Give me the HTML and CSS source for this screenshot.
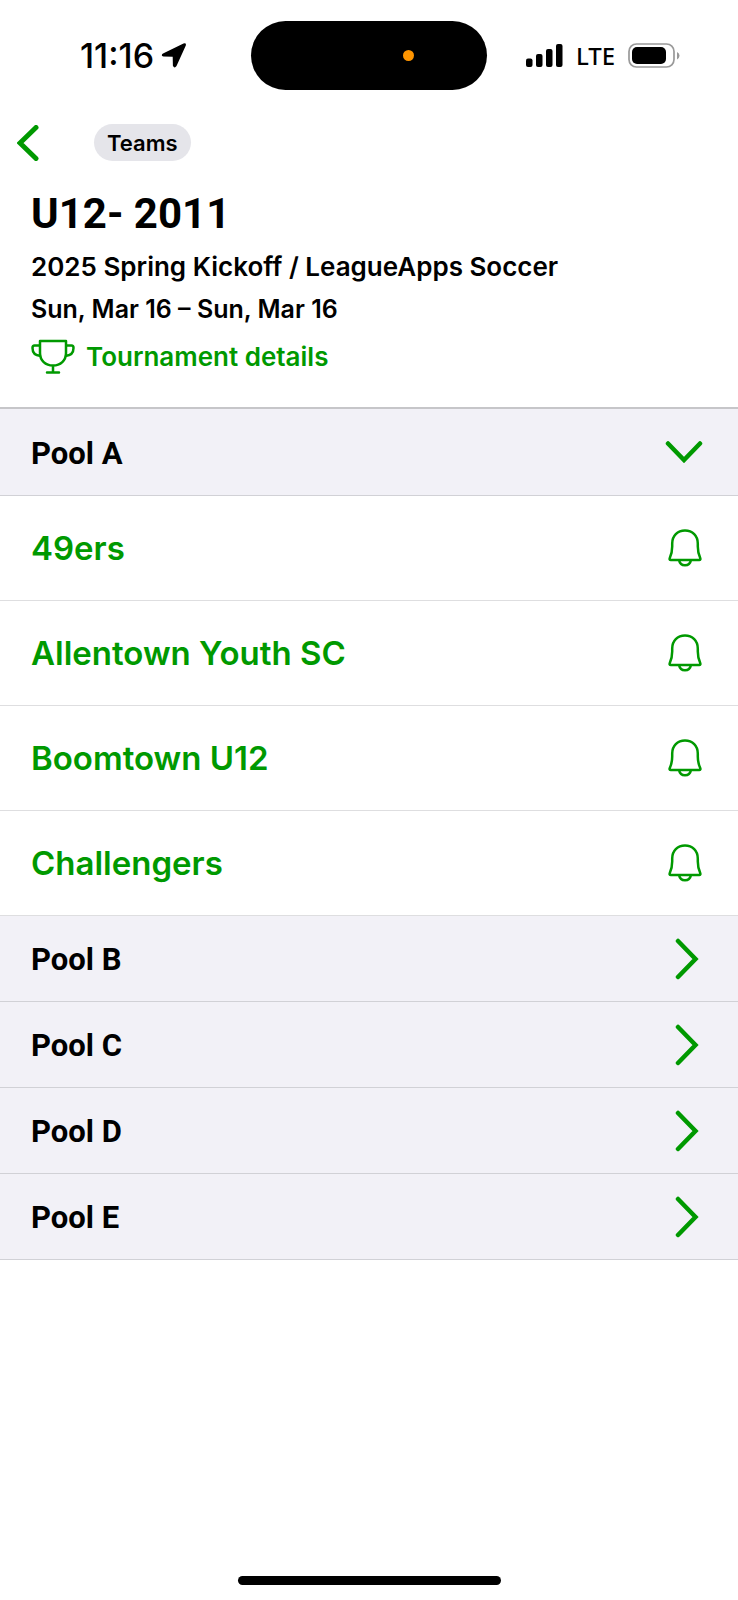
FILE: index.html
```html
<!DOCTYPE html>
<html lang="en">
<head>
<meta charset="utf-8">
<meta name="viewport" content="width=device-width, initial-scale=1">
<title>U12- 2011</title>
<link rel="stylesheet" href="styles.css">
</head>
<body>
<svg class="defs" aria-hidden="true">
  <symbol id="bell" viewBox="0 0 34 38">
    <path d="M17 1.500C9.500 1.500 4.200 7 4.200 14.500v3C4.200 23.500 3.200 26 1.800 29q-.8 2 1 2h28.400q1.800 0 1-2C30.800 26 29.800 23.500 29.800 17.500v-3C29.800 7 24.500 1.500 17 1.500z"/>
    <path d="M11.200 31.500c.5 3 2.700 4.700 5.800 4.700s5.300-1.700 5.800-4.700"/>
  </symbol>
  <symbol id="next" viewBox="0 0 24 42"><path d="M3 3 20.500 21 3 39"/></symbol>
</svg>
<div class="screen">
  <div class="status">
    <div class="status-left">
      <span class="time">11:16</span>
      <svg class="location" viewBox="0 0 26 26"><path d="M2 10.500 22.500.5q3-.9 2.300 2L15.500 23q-2 3-3.600-.3l-.2-8.900-9.300-.3q-3-1-.4-3z"/></svg>
    </div>
    <div class="island"><span class="dot"></span></div>
    <div class="status-right">
      <svg class="signal" viewBox="0 0 37 24"><rect y="14.500" width="6.500" height="8.500" rx="2"/><rect x="10" y="10" width="6.500" height="13" rx="2"/><rect x="20" y="5" width="6.500" height="18" rx="2"/><rect x="30" width="6.500" height="23" rx="2"/></svg>
      <span class="network">LTE</span>
      <svg class="battery" viewBox="0 0 52 26"><rect x="1" y="1" width="45" height="23" rx="7.500" fill="none" stroke="#999" stroke-width="1.700"/><rect x="4" y="4" width="34" height="17" rx="5"/><path d="M49 9v7.500q2.500-1.500 2.500-3.800T49 9z" fill="#999"/></svg>
    </div>
  </div>
  <nav class="nav">
    <button class="back" aria-label="Back"><svg viewBox="0 0 22 36"><path d="M19 2.500 3 18 19 33.500"/></svg></button>
    <button class="chip">Teams</button>
  </nav>
  <header class="heading">
    <h1>U12- 2011</h1>
    <p class="event">2025 Spring Kickoff / LeagueApps Soccer</p>
    <p class="dates">Sun, Mar 16 – Sun, Mar 16</p>
    <a class="details" href="#">
      <svg viewBox="0 0 44 36"><path d="M9 2h26v12c0 7.500-5.500 12.500-13 12.500S9 21.500 9 14zM9 6.500H3.500Q1.500 6.500 1.500 9c0 5 2.500 7.500 8 8M35 6.500h5.500q2 0 2 2.500c0 5-2.500 7.500-8 8M22 26.500V33M16 33.500h12"/></svg>
      <span>Tournament details</span>
    </a>
  </header>
  <main class="pools">
    <button class="pool open" aria-expanded="true"><span>Pool A</span><svg class="down" viewBox="0 0 38 22"><path d="M3 2.500 19 19 35 2.500"/></svg></button>
    <ul class="teams">
      <li><a href="#">49ers</a><button class="alert" aria-label="Notify me about 49ers"><svg><use href="#bell"/></svg></button></li>
      <li><a href="#">Allentown Youth SC</a><button class="alert" aria-label="Notify me about Allentown Youth SC"><svg><use href="#bell"/></svg></button></li>
      <li><a href="#">Boomtown U12</a><button class="alert" aria-label="Notify me about Boomtown U12"><svg><use href="#bell"/></svg></button></li>
      <li><a href="#">Challengers</a><button class="alert" aria-label="Notify me about Challengers"><svg><use href="#bell"/></svg></button></li>
    </ul>
    <button class="pool" aria-expanded="false"><span>Pool B</span><svg class="next"><use href="#next"/></svg></button>
    <button class="pool" aria-expanded="false"><span>Pool C</span><svg class="next"><use href="#next"/></svg></button>
    <button class="pool" aria-expanded="false"><span>Pool D</span><svg class="next"><use href="#next"/></svg></button>
    <button class="pool" aria-expanded="false"><span>Pool E</span><svg class="next"><use href="#next"/></svg></button>
  </main>
  <div class="home"></div>
</div>
</body>
</html>
```
FILE: styles.css
```css
* { box-sizing: border-box; }
body {
  margin: 0;
  background: #fff;
  color: #000;
  font-family: Inter, sans-serif;
  font-weight: 600;
}
button {
  border: 0;
  padding: 0;
  background: none;
  font: inherit;
  color: inherit;
  cursor: pointer;
}
a { color: #009900; text-decoration: none; }
svg { display: block; flex: none; }
.defs { position: absolute; width: 0; height: 0; }
.screen { display: flex; flex-direction: column; min-height: 100vh; }

.status {
  display: grid;
  grid-template-columns: 1fr 236px 1fr;
  align-items: center;
  padding-top: 21px;
}
.status-left { display: flex; align-items: center; gap: 7px; padding-left: 80px; }
.time { font-size: 34px; line-height: 40px; font-weight: 500; }
.location { width: 26px; height: 26px; }
.island {
  display: flex;
  align-items: center;
  height: 69px;
  padding-left: 152px;
  border-radius: 35px;
  background: #000;
}
.dot { width: 11px; height: 11px; border-radius: 50%; background: #ff9500; }
.status-right { display: flex; align-items: center; padding-left: 39px; }
.signal { width: 37px; height: 24px; }
.network {
  margin: 0 13px;
  font: 500 24px/32px "Noto Sans", sans-serif;
}
.battery { width: 52px; height: 26px; }

.nav { display: flex; align-items: center; gap: 55px; padding: 34px 17px 0; }
.back svg {
  width: 22px;
  height: 36px;
  fill: none;
  stroke: #009900;
  stroke-width: 5;
  stroke-linecap: round;
  stroke-linejoin: miter;
}
.chip {
  height: 37px;
  padding: 0 13px;
  border-radius: 19px;
  background: #e5e5ea;
  font-size: 22px;
}

.heading { padding: 25px 31px 24px; }
h1 { margin: 0 0 4px; font: 700 42px/56px Roboto, sans-serif; }
.heading p { margin: 0; line-height: 42px; }
.event { font-size: 26px; }
.dates { font-size: 25px; }
.details { display: inline-flex; align-items: center; gap: 11px; font-size: 26px; line-height: 53px; }
.details svg {
  width: 44px;
  height: 36px;
  fill: none;
  stroke: #009900;
  stroke-width: 2.500;
  stroke-linecap: round;
  stroke-linejoin: round;
}

.pool {
  display: flex;
  justify-content: space-between;
  align-items: center;
  width: 100%;
  height: 86px;
  padding: 0 39px 0 31px;
  border-bottom: 1px solid #d1d1d6;
  background: #f2f1f7;
  font: 700 31px/40px Roboto, sans-serif;
}
.pool span { padding-top: 3px; }
.open { height: 89px; padding-right: 35px; border-top: 2px solid #c6c6c9; }
.pool svg {
  fill: none;
  stroke: #009900;
  stroke-width: 4.500;
  stroke-linecap: round;
  stroke-linejoin: miter;
}
.down { width: 38px; height: 22px; }
.next { width: 24px; height: 42px; }
.teams { margin: 0; padding: 0; list-style: none; }
.teams li {
  display: flex;
  justify-content: space-between;
  align-items: center;
  height: 105px;
  padding: 0 36px 0 31px;
  border-bottom: 1px solid #dedee0;
  font-size: 33px;
  line-height: 40px;
}
.alert svg {
  width: 34px;
  height: 38px;
  fill: none;
  stroke: #009900;
  stroke-width: 2.500;
  stroke-linejoin: round;
}
.home {
  width: 263px;
  height: 9px;
  margin: auto auto 15px;
  border-radius: 5px;
  background: #000;
}
```
